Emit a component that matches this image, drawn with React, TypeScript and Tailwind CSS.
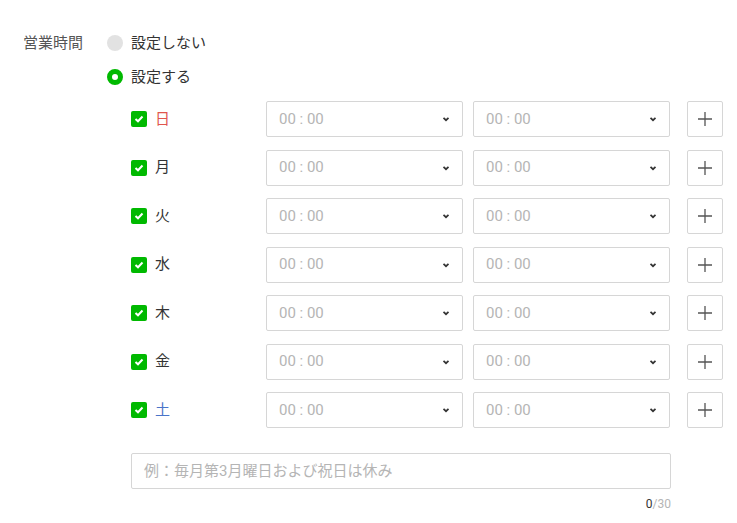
import React from "react";

const days = [
  { label: "日", color: "text-[#e0564e]" },
  { label: "月", color: "text-[#333333]" },
  { label: "火", color: "text-[#333333]" },
  { label: "水", color: "text-[#333333]" },
  { label: "木", color: "text-[#333333]" },
  { label: "金", color: "text-[#333333]" },
  { label: "土", color: "text-[#4a74c9]" },
];

const Chevron = () => (
  <svg width="8" height="6" viewBox="0 0 8 6" className="text-[#333]">
    <path d="M1.5 1.8 L4 4.2 L6.5 1.8" fill="none" stroke="currentColor" strokeWidth="1.7" />
  </svg>
);

const Check = () => (
  <svg width="10" height="8" viewBox="0 0 10 8">
    <path d="M1.5 4 L4 6.3 L8.5 1.5" fill="none" stroke="#fff" strokeWidth="2" />
  </svg>
);

const TimeSelect = () => (
  <div className="w-[197px] h-9 border border-[#d6d6d6] rounded-[2px] bg-white flex items-center justify-between pl-3 pr-[12px]">
    <span className="text-[15px] text-[#b5b5b5]">00 : 00</span>
    <Chevron />
  </div>
);

export default function App() {
  return (
    <div
      className="w-[737px] h-[523px] bg-white pt-[33px] pl-[23px] text-[#333]"
      style={{ fontFamily: 'Roboto, "Noto Sans CJK JP", sans-serif' }}
    >
      <div className="flex">
        <div className="w-[84px] text-[15px] leading-5 text-[#555]">営業時間</div>
        <div className="flex flex-col">
          {/* radios */}
          <div className="flex items-center h-5 gap-2">
            <span className="w-4 h-4 rounded-full bg-[#e2e2e2]" />
            <span className="text-[15px] text-[#333]">設定しない</span>
          </div>
          <div className="flex items-center h-5 gap-2 mt-[14px]">
            <span className="w-4 h-4 rounded-full border-[5px] border-[#00b900] bg-white" />
            <span className="text-[15px] text-[#333]">設定する</span>
          </div>

          {/* week rows */}
          <div className="ml-6 mt-[14px] flex flex-col gap-[12.5px]">
            {days.map((d) => (
              <div key={d.label} className="flex items-center h-9">
                <div className="w-[135px] flex items-center gap-2">
                  <span className="w-4 h-4 rounded-[2px] bg-[#00b900] flex items-center justify-center">
                    <Check />
                  </span>
                  <span className={`text-[15px] ${d.color}`}>{d.label}</span>
                </div>
                <TimeSelect />
                <div className="w-[10px]" />
                <TimeSelect />
                <button className="ml-[17px] w-9 h-9 border border-[#d6d6d6] rounded-[2px] bg-white flex items-center justify-center">
                  <svg width="14" height="14" viewBox="0 0 14 14">
                    <path d="M7 0 V14 M0 7 H14" stroke="#555" strokeWidth="1.3" />
                  </svg>
                </button>
              </div>
            ))}

            <div className="mt-[12.5px] w-[540px] h-9 border border-[#d6d6d6] rounded-[2px] flex items-center px-3">
              <span className="text-[15px] text-[#b5b5b5]">例：毎月第3月曜日および祝日は休み</span>
            </div>
            <div className="-mt-[6px] w-[540px] text-right text-[12px] leading-4">
              <span className="text-[#333]">0</span>
              <span className="text-[#b5b5b5]">/30</span>
            </div>
          </div>
        </div>
      </div>
    </div>
  );
}
